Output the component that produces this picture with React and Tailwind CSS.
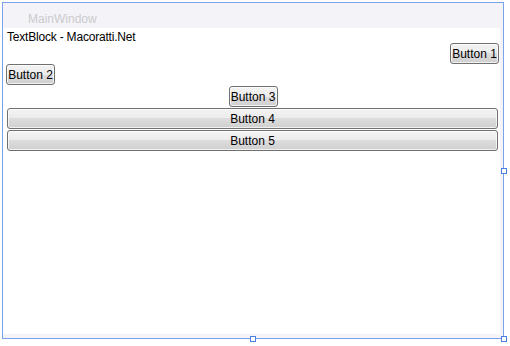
const btn =
  "flex items-center justify-center h-[21px] border border-[#707070] rounded-[3px] text-[12px] leading-none text-black bg-[linear-gradient(#f3f3f3_0%,#ebebeb_50%,#dddddd_50%,#cfcfcf_100%)] shadow-[inset_0_0_0_1px_rgba(255,255,255,0.7)]";

const Handle = ({ className }) => (
  <div className={"absolute w-[6px] h-[6px] border border-[#4a7fe0] bg-white " + className} />
);

export default function App() {
  return (
    <div className="w-[510px] h-[346px] bg-white relative font-['Liberation_Sans',Arial,sans-serif]">
      <div className="absolute left-[2px] top-[2px] w-[502px] h-[337px] border border-[#7aa3ec] bg-[#f4f3f7] flex flex-col pr-[3px] pb-[4px]">
        {/* title bar */}
        <div className="h-[25px] shrink-0 pl-[25px] pt-[10px] text-[12px] leading-none text-[#cbcbce]">
          MainWindow
        </div>
        {/* window content */}
        <div className="flex-1 bg-white flex flex-col">
          <div className="h-[15px] pl-[4px] pt-[2px] text-[12px] leading-[15px] text-black tracking-[-0.2px]">
            TextBlock - Macoratti.Net
          </div>
          <div className={btn + " self-end w-[49px] mr-[1px]"}>Button 1</div>
          <div className={btn + " self-start w-[49px] ml-[3px]"}>Button 2</div>
          <div className={btn + " self-center w-[49px] mt-[1px] ml-[3px]"}>Button 3</div>
          <div className={btn + " h-[20px] mt-[1px] ml-[4px] mr-[2px]"}>Button 4</div>
          <div className={btn + " h-[20px] mt-[1px] ml-[4px] mr-[2px]"}>Button 5</div>
        </div>
      </div>
      <Handle className="left-[250px] top-[336px]" />
      <Handle className="left-[501px] top-[336px]" />
      <Handle className="left-[501px] top-[168px]" />
    </div>
  );
}
